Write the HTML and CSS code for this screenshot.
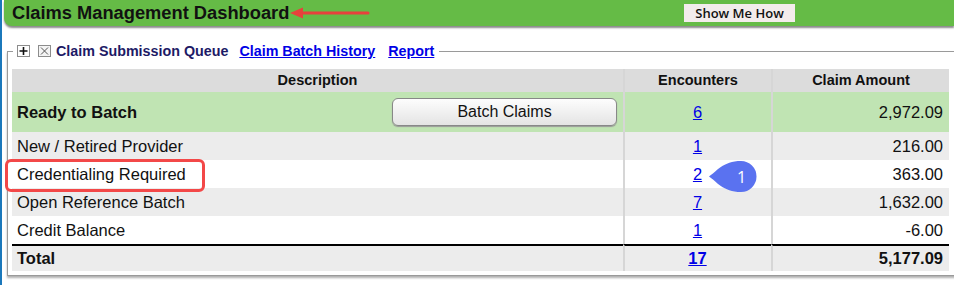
FILE: index.html
```html
<!DOCTYPE html>
<html lang="en">

<head>
    <meta charset="UTF-8">
    <meta name="viewport" content="width=device-width, initial-scale=1.0">
    <title>Claims Management Dashboard</title>
    <link rel="stylesheet" href="styles.css">
</head>

<body>
    <div class="page">
        <div class="topbar">
            <h1 class="title">Claims Management Dashboard</h1>
            <button class="howto">Show Me How</button>
        </div>

        <fieldset class="queue">
            <legend class="queue-tabs">
                <span class="box-icon">
                    <svg viewBox="0 0 13 12" width="13" height="12">
                        <rect x="0.5" y="0.5" width="12" height="11" fill="#fff" stroke="#8c8c8c" />
                        <path d="M2.5 6h8M6.5 2v8" stroke="#111" stroke-width="1.6" />
                    </svg>
                </span>
                <span class="box-icon close">
                    <svg viewBox="0 0 13 12" width="13" height="12">
                        <rect x="0.5" y="0.5" width="12" height="11" fill="#f4f4f4" stroke="#8c8c8c" />
                        <path d="M3 2.5l7 7M10 2.5l-7 7" stroke="#555" stroke-width="1" />
                    </svg>
                </span>
                <span class="tab-current">Claim Submission Queue</span>
                <a href="#" class="tab-link">Claim Batch History</a>
                <a href="#" class="tab-link report">Report</a>
            </legend>

            <table class="claims">
                <thead>
                    <tr>
                        <th class="col-desc">Description</th>
                        <th class="col-enc">Encounters</th>
                        <th class="col-amt">Claim Amount</th>
                    </tr>
                </thead>
                <tbody>
                    <tr class="ready">
                        <td>
                            <div class="ready-cell">
                                <span>Ready to Batch</span>
                                <button class="batch-btn">Batch Claims</button>
                            </div>
                        </td>
                        <td class="num"><a href="#">6</a></td>
                        <td class="amt">2,972.09</td>
                    </tr>
                    <tr class="shade">
                        <td>New / Retired Provider</td>
                        <td class="num"><a href="#">1</a></td>
                        <td class="amt">216.00</td>
                    </tr>
                    <tr>
                        <td>Credentialing Required</td>
                        <td class="num"><a href="#">2</a></td>
                        <td class="amt">363.00</td>
                    </tr>
                    <tr class="shade">
                        <td>Open Reference Batch</td>
                        <td class="num"><a href="#">7</a></td>
                        <td class="amt">1,632.00</td>
                    </tr>
                    <tr>
                        <td>Credit Balance</td>
                        <td class="num"><a href="#">1</a></td>
                        <td class="amt">-6.00</td>
                    </tr>
                </tbody>
                <tfoot>
                    <tr class="total">
                        <td>Total</td>
                        <td class="num"><a href="#">17</a></td>
                        <td class="amt">5,177.09</td>
                    </tr>
                </tfoot>
            </table>
        </fieldset>

        <!-- annotations drawn over the screenshot -->
        <svg class="note-arrow" viewBox="0 0 82 14" width="82" height="14">
            <path d="M12 7H79" stroke="#e8413c" stroke-width="3" stroke-linecap="round" />
            <polygon points="1,7 14,1.5 14,12.5" fill="#e8413c" />
        </svg>
        <div class="note-box"></div>
        <svg class="note-badge" viewBox="0 0 49 31" width="49" height="31">
            <path d="M1 15.5C8 11 15 0 33 0A15.5 15.5 0 0 1 33 31C15 31 8 20 1 15.5Z" fill="#5a72f0" />
            <text x="33.5" y="21.5" text-anchor="middle">1</text>
        </svg>
    </div>
</body>

</html>
```

FILE: styles.css
```css
body {
    font-family: "Liberation Sans", Arial, sans-serif;
    margin: 0;
    padding: 0;
    background: #fff;
}

.page {
    position: relative;
    height: 285px;
    border-left: 2px solid #1b78bb;
    overflow: hidden;
}

/* green title bar */
.topbar {
    display: flex;
    align-items: center;
    height: 26px;
    margin-left: 2px;
    padding-left: 8px;
    background-color: #65bb46;
    border-bottom-left-radius: 8px;
    box-shadow: 0 2px 2px #8a8a8a;
}

.title {
    margin: 0;
    font-size: 18.3px;
    line-height: 26px;
    font-weight: bold;
    color: #111;
}

.howto {
    margin-left: auto;
    margin-right: 159px;
    width: 111px;
    height: 18px;
    padding: 0;
    border: none;
    background-color: #f3ecec;
    font-family: "Open Sans", sans-serif;
    font-weight: 600;
    font-size: 13px;
    line-height: 18px;
    color: #111;
}

/* queue panel */
.queue {
    margin: 17px -20px 0 5px;
    padding: 10px 4px 4px 4px;
    border: 1px solid #9a9a9a;
    box-shadow: 0 2px 2px #b0b0b0;
}

.queue-tabs {
    display: flex;
    align-items: center;
    height: 16px;
    margin-left: 1px;
    padding: 0 5px 0 4px;
    font-size: 14.3px;
    font-weight: bold;
}

.box-icon {
    display: flex;
    margin-right: 8px;
}

.box-icon.close {
    margin-right: 5px;
}

.tab-current {
    color: #1d1a66;
    margin-right: 11px;
}

.tab-link {
    color: #0000e6;
    text-decoration: underline;
}

.tab-link.report {
    margin-left: 13px;
}

/* claims table */
.claims {
    width: 937px;
    border-collapse: separate;
    border-spacing: 0;
    font-size: 16.5px;
    line-height: 19px;
    color: #111;
}

.claims th {
    height: 23px;
    padding: 0;
    background-color: #dcdcdc;
    font-size: 14.5px;
    font-weight: bold;
    text-align: center;
}

.claims td {
    height: 28px;
    padding: 0 6px 0 5px;
}

.col-desc {
    width: 611px;
}

.col-enc {
    width: 146px;
}

.claims th + th,
.claims td + td {
    border-left: 2px solid #d6d6d6;
}

.claims .num {
    text-align: center;
}

.claims .num a {
    color: #0000e6;
}

.claims .amt {
    text-align: right;
}

.ready td {
    height: 40px;
    background-color: #c0e4b3;
    font-weight: bold;
}

.ready .num,
.ready .amt {
    font-weight: normal;
}

.ready-cell {
    display: flex;
    align-items: center;
    justify-content: space-between;
}

.batch-btn {
    width: 225px;
    height: 28px;
    border: 1px solid #888;
    border-radius: 6px;
    background: linear-gradient(#fdfdfd, #e4e4e4);
    box-shadow: 0 1px 1px #999;
    font-family: "Liberation Sans", Arial, sans-serif;
    font-size: 16px;
    color: #111;
}

.shade td {
    background-color: #ececec;
}

.total td {
    height: 25px;
    background-color: #ececec;
    border-top: 2px solid #000;
    font-weight: bold;
}

/* annotations */
.note-arrow {
    position: absolute;
    left: 287px;
    top: 6px;
}

.note-box {
    position: absolute;
    left: 3px;
    top: 159px;
    width: 200px;
    height: 33px;
    box-sizing: border-box;
    border: 3px solid #f34848;
    border-radius: 6px;
}

.note-badge {
    position: absolute;
    left: 706px;
    top: 161px;
}

.note-badge text {
    fill: #fff;
    font-family: "Open Sans", sans-serif;
    font-size: 16px;
}
```
